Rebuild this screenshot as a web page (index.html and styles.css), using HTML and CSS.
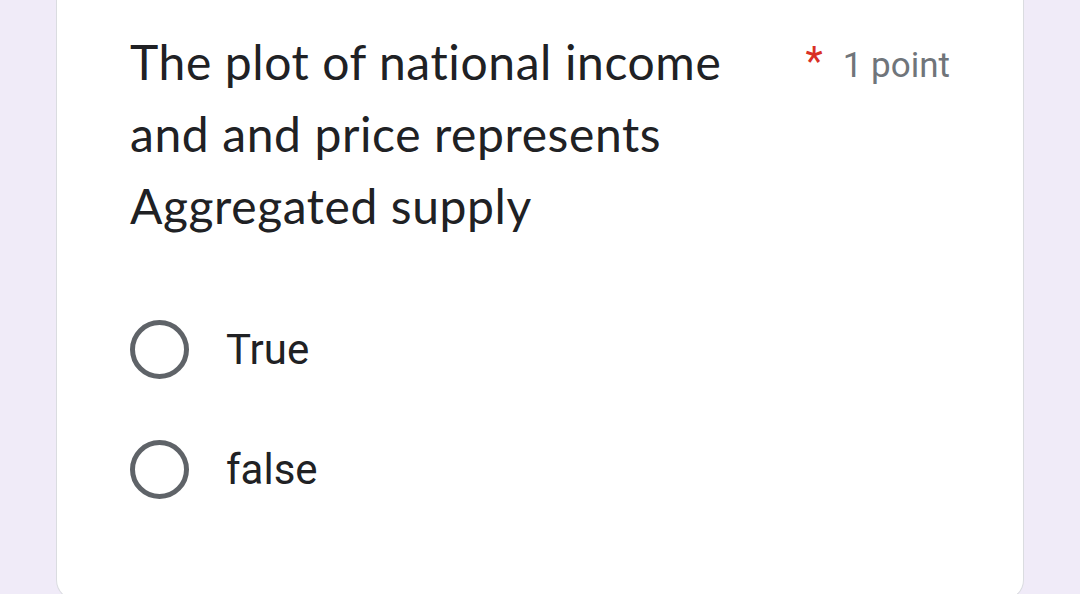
FILE: index.html
```html
<!DOCTYPE html>
<html>

  <head>
    <meta charset="UTF-8">
    <title>Question</title>
    <link rel="stylesheet" href="styles.css">
  </head>

  <body>
    <div class="card">
      <div class="q-head">
        <div class="q-title">The plot of national income and and price represents Aggregated supply</div>
        <div class="q-meta">
          <span class="req">*</span>
          <span class="points">1 point</span>
        </div>
      </div>
      <div class="options">
        <label class="option">
          <span class="radio"></span>
          <span class="opt-text">True</span>
        </label>
        <label class="option">
          <span class="radio"></span>
          <span class="opt-text">false</span>
        </label>
      </div>
    </div>
  </body>

</html>
```

FILE: styles.css
```css
* {
  margin: 0;
  padding: 0;
  box-sizing: border-box;
}

body {
  background: #f0ebf8;
  height: 594px;
  overflow: hidden;
  font-family: Roboto, "Liberation Sans", sans-serif;
}

.card {
  margin: 0 56px;
  height: 600px;
  background: #fff;
  border: 1px solid #dadce0;
  border-top: none;
  border-radius: 0 0 20px 20px;
  padding: 26px 73px 0 73px;
}

.q-head {
  display: flex;
  justify-content: space-between;
  align-items: flex-start;
}

.q-title {
  width: 640px;
  font-family: Lato, "Liberation Sans", sans-serif;
  font-size: 48px;
  letter-spacing: 0.6px;
  font-variant-ligatures: none;
  line-height: 72px;
  color: #202124;
}

.q-meta {
  display: flex;
  align-items: flex-start;
  padding-top: 16px;
}

.req {
  color: #d93025;
  font-size: 40px;
  line-height: 40px;
  margin-right: 20px;
}

.points {
  color: #70757a;
  font-size: 35px;
  line-height: 48px;
}

.options {
  display: flex;
  flex-direction: column;
  gap: 61px;
  margin-top: 78px;
}

.option {
  display: flex;
  align-items: center;
}

.radio {
  width: 59px;
  height: 59px;
  border: 5px solid #5f6368;
  border-radius: 50%;
  margin-right: 37px;
}

.opt-text {
  font-size: 42px;
  color: #202124;
}
```
